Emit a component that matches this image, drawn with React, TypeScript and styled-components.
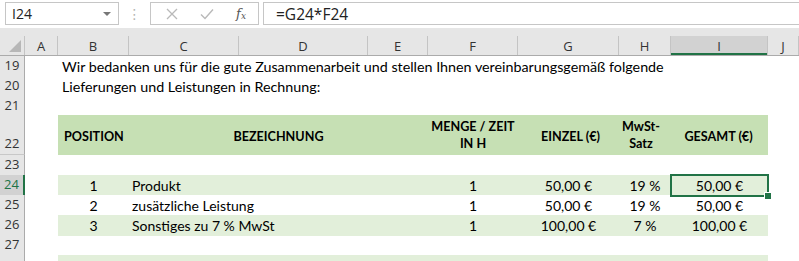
import React from "react";
import styled, { createGlobalStyle } from "styled-components";

const GlobalStyle = createGlobalStyle`
  html, body { margin: 0; padding: 0; background: #ffffff; }
  body { width: 799px; height: 261px; overflow: hidden; }
`;

const UI_FONT = `"Open Sans", "DejaVu Sans", sans-serif`;
const CELL_FONT = `Lato, "Liberation Sans", sans-serif`;
const GREEN = "#217346";
const TEMPLATE = "25px 33px 71px 110px 129px 60px 90px 101px 52px 97px 1fr";
const BAND_TEMPLATE = "71px 110px 129px 60px 90px 101px 52px 97px";

const LETTERS = ["A", "B", "C", "D", "E", "F", "G", "H", "I", "J"];

type Item = { pos: string; name: string; qty: string; price: string; vat: string; total: string };

const items: Item[] = [
  { pos: "1", name: "Produkt", qty: "1", price: "50,00 €", vat: "19 %", total: "50,00 €" },
  { pos: "2", name: "zusätzliche Leistung", qty: "1", price: "50,00 €", vat: "19 %", total: "50,00 €" },
  { pos: "3", name: "Sonstiges zu 7 % MwSt", qty: "1", price: "100,00 €", vat: "7 %", total: "100,00 €" },
];

function App() {
  return (
    <>
      <GlobalStyle />
      <Window>
        <FormulaBar>
          <NameBox>
            <span>I24</span>
            <Caret />
          </NameBox>
          <Grip>⋮</Grip>
          <ButtonsBox>
            <svg width="12" height="12" viewBox="0 0 12 12">
              <path d="M1 1 L11 11 M11 1 L1 11" stroke="#b9b9b9" strokeWidth="1.3" fill="none" />
            </svg>
            <svg width="14" height="12" viewBox="0 0 14 12">
              <path d="M1 6.5 L5 10.5 L13 1.5" stroke="#b9b9b9" strokeWidth="1.4" fill="none" />
            </svg>
            <Fx>
              f<sub>x</sub>
            </Fx>
          </ButtonsBox>
          <FormulaInput>=G24*F24</FormulaInput>
        </FormulaBar>

        <Strip />

        <ColumnHeaders>
          <Corner>
            <svg width="12" height="12" viewBox="0 0 12 12">
              <path d="M12 0 L12 12 L0 12 Z" fill="#b7b7b7" />
            </svg>
          </Corner>
          {LETTERS.map((l) => (
            <ColHead key={l} $active={l === "I"}>
              {l}
            </ColHead>
          ))}
        </ColumnHeaders>

        <Row $h={20}>
          <RowHead>19</RowHead>
          <Overflow>Wir bedanken uns für die gute Zusammenarbeit und stellen Ihnen vereinbarungsgemäß folgende</Overflow>
        </Row>
        <Row $h={20}>
          <RowHead>20</RowHead>
          <Overflow>Lieferungen und Leistungen in Rechnung:</Overflow>
        </Row>
        <Row $h={19}>
          <RowHead>21</RowHead>
        </Row>
        <Row $h={40}>
          <RowHead>22</RowHead>
          <Band $fill="#c6e0b4">
            <HeadCell $align="left">POSITION</HeadCell>
            <HeadCell $span={3}>BEZEICHNUNG</HeadCell>
            <HeadCell $two>
              MENGE / ZEIT
              <br />
              IN H
            </HeadCell>
            <HeadCell $shift={4}>EINZEL (€)</HeadCell>
            <HeadCell $shift={-8} $two>
              MwSt-
              <br />
              Satz
            </HeadCell>
            <HeadCell $shift={-2}>GESAMT (€)</HeadCell>
          </Band>
        </Row>
        <Row $h={20}>
          <RowHead>23</RowHead>
        </Row>
        {items.map((it, i) => (
          <Row $h={20} key={it.pos}>
            <RowHead $active={i === 0}>{24 + i}</RowHead>
            <Band $fill={i % 2 === 0 ? "#e2efda" : "#ffffff"}>
              <Cell>{it.pos}</Cell>
              <Cell $align="left" $span={3}>
                {it.name}
              </Cell>
              <Cell>{it.qty}</Cell>
              <Cell>{it.price}</Cell>
              <Cell>{it.vat}</Cell>
              <Cell>
                {it.total}
                {i === 0 && (
                  <Selection>
                    <Handle />
                  </Selection>
                )}
              </Cell>
            </Band>
          </Row>
        ))}
        <Row $h={20}>
          <RowHead>27</RowHead>
        </Row>
        <Row $h={20}>
          <RowHead />
          <Band $fill="#e2efda" />
        </Row>
      </Window>
    </>
  );
}

export default App;

const Window = styled.div`
  width: 799px;
  height: 261px;
  overflow: hidden;
  background: #ffffff;
`;

const FormulaBar = styled.div`
  height: 28px;
  display: flex;
  align-items: flex-start;
  padding: 2px 0 0 5px;
  box-sizing: border-box;
  background: #ffffff;
  font-family: ${UI_FONT};
`;

const NameBox = styled.div`
  width: 114px;
  height: 23px;
  box-sizing: border-box;
  border: 1px solid #c6c6c6;
  display: flex;
  align-items: center;
  justify-content: space-between;
  padding: 0 7px 0 6px;
  font-size: 14px;
  color: #222;
`;

const Caret = styled.span`
  width: 0;
  height: 0;
  border-left: 4px solid transparent;
  border-right: 4px solid transparent;
  border-top: 4px solid #777;
`;

const Grip = styled.div`
  width: 31px;
  height: 23px;
  display: flex;
  align-items: center;
  justify-content: center;
  color: #b5b5b5;
  font-size: 14px;
`;

const ButtonsBox = styled.div`
  width: 109px;
  height: 23px;
  box-sizing: border-box;
  border: 1px solid #c6c6c6;
  display: flex;
  align-items: center;
  justify-content: space-between;
  padding: 0 12px 0 15px;
`;

const Fx = styled.span`
  font-family: "DejaVu Serif", "Liberation Serif", serif;
  font-style: italic;
  font-size: 13px;
  color: #555;
  line-height: 1;
  sub {
    font-size: 9px;
    vertical-align: -1px;
  }
`;

const FormulaInput = styled.div`
  flex: 1;
  height: 23px;
  margin-left: 4px;
  box-sizing: border-box;
  border: 1px solid #c6c6c6;
  border-right: none;
  display: flex;
  align-items: center;
  padding-left: 12px;
  font-size: 15.5px;
  color: #222;
`;

const Strip = styled.div`
  height: 8px;
  background: #e6e6e6;
`;

const ColumnHeaders = styled.div`
  display: grid;
  grid-template-columns: ${TEMPLATE};
  height: 20px;
  background: #e6e6e6;
  border-bottom: 1px solid #ababab;
  box-sizing: border-box;
  font-family: ${UI_FONT};
  font-size: 13px;
  color: #333;
`;

const Corner = styled.div`
  display: flex;
  align-items: flex-end;
  justify-content: flex-end;
  padding: 0 3px 3px 0;
  border-right: 1px solid #c4c4c4;
`;

const ColHead = styled.div<{ $active?: boolean }>`
  display: flex;
  align-items: center;
  justify-content: center;
  border-right: 1px solid #c4c4c4;
  background: ${(p) => (p.$active ? "#d2d2d2" : "transparent")};
  box-shadow: ${(p) => (p.$active ? `inset 0 -2px 0 ${GREEN}` : "none")};
  padding-top: 1px;
`;

const Row = styled.div<{ $h: number }>`
  display: grid;
  grid-template-columns: ${TEMPLATE};
  height: ${(p) => p.$h}px;
  font-family: ${CELL_FONT};
  font-size: 14px;
  color: #000;
`;

const RowHead = styled.div<{ $active?: boolean }>`
  grid-column: 1;
  display: flex;
  align-items: flex-end;
  justify-content: center;
  padding-bottom: 2px;
  box-sizing: border-box;
  background: ${(p) => (p.$active ? "#d2d2d2" : "#e6e6e6")};
  color: ${(p) => (p.$active ? GREEN : "#333")};
  border-bottom: 1px solid #c8c8c8;
  border-right: ${(p) => (p.$active ? `2px solid ${GREEN}` : "1px solid #ababab")};
  font-family: ${UI_FONT};
  font-size: 13px;
`;

const Overflow = styled.div`
  grid-column: 3 / -1;
  white-space: nowrap;
  display: flex;
  align-items: center;
  padding-left: 4px;
  font-size: 14.3px;
`;

const Band = styled.div<{ $fill: string }>`
  grid-column: 3 / 11;
  display: grid;
  grid-template-columns: ${BAND_TEMPLATE};
  background: ${(p) => p.$fill};
`;

const Cell = styled.div<{ $align?: "left" | "center"; $span?: number }>`
  position: relative;
  grid-column: span ${(p) => p.$span ?? 1};
  display: flex;
  align-items: center;
  justify-content: ${(p) => (p.$align === "left" ? "flex-start" : "center")};
  padding-left: ${(p) => (p.$align === "left" ? "3px" : "0")};
  white-space: nowrap;
`;

const HeadCell = styled.div<{ $align?: "left" | "center"; $span?: number; $shift?: number; $two?: boolean }>`
  grid-column: span ${(p) => p.$span ?? 1};
  display: flex;
  align-items: center;
  justify-content: ${(p) => (p.$align === "left" ? "flex-start" : "center")};
  text-align: center;
  padding-left: ${(p) => (p.$align === "left" ? "6px" : `${Math.max(0, p.$shift ?? 0)}px`)};
  padding-right: ${(p) => `${Math.max(0, -(p.$shift ?? 0))}px`};
  padding-top: ${(p) => (p.$two ? "0" : "3px")};
  font-size: 12.6px;
  font-weight: 700;
  line-height: 17px;
  white-space: nowrap;
`;

const Selection = styled.div`
  position: absolute;
  left: -1px;
  top: -1px;
  right: -1px;
  bottom: -1px;
  border: 2px solid ${GREEN};
  pointer-events: none;
`;

const Handle = styled.div`
  position: absolute;
  right: -5px;
  bottom: -5px;
  width: 6px;
  height: 6px;
  background: ${GREEN};
  border: 1px solid #ffffff;
`;
